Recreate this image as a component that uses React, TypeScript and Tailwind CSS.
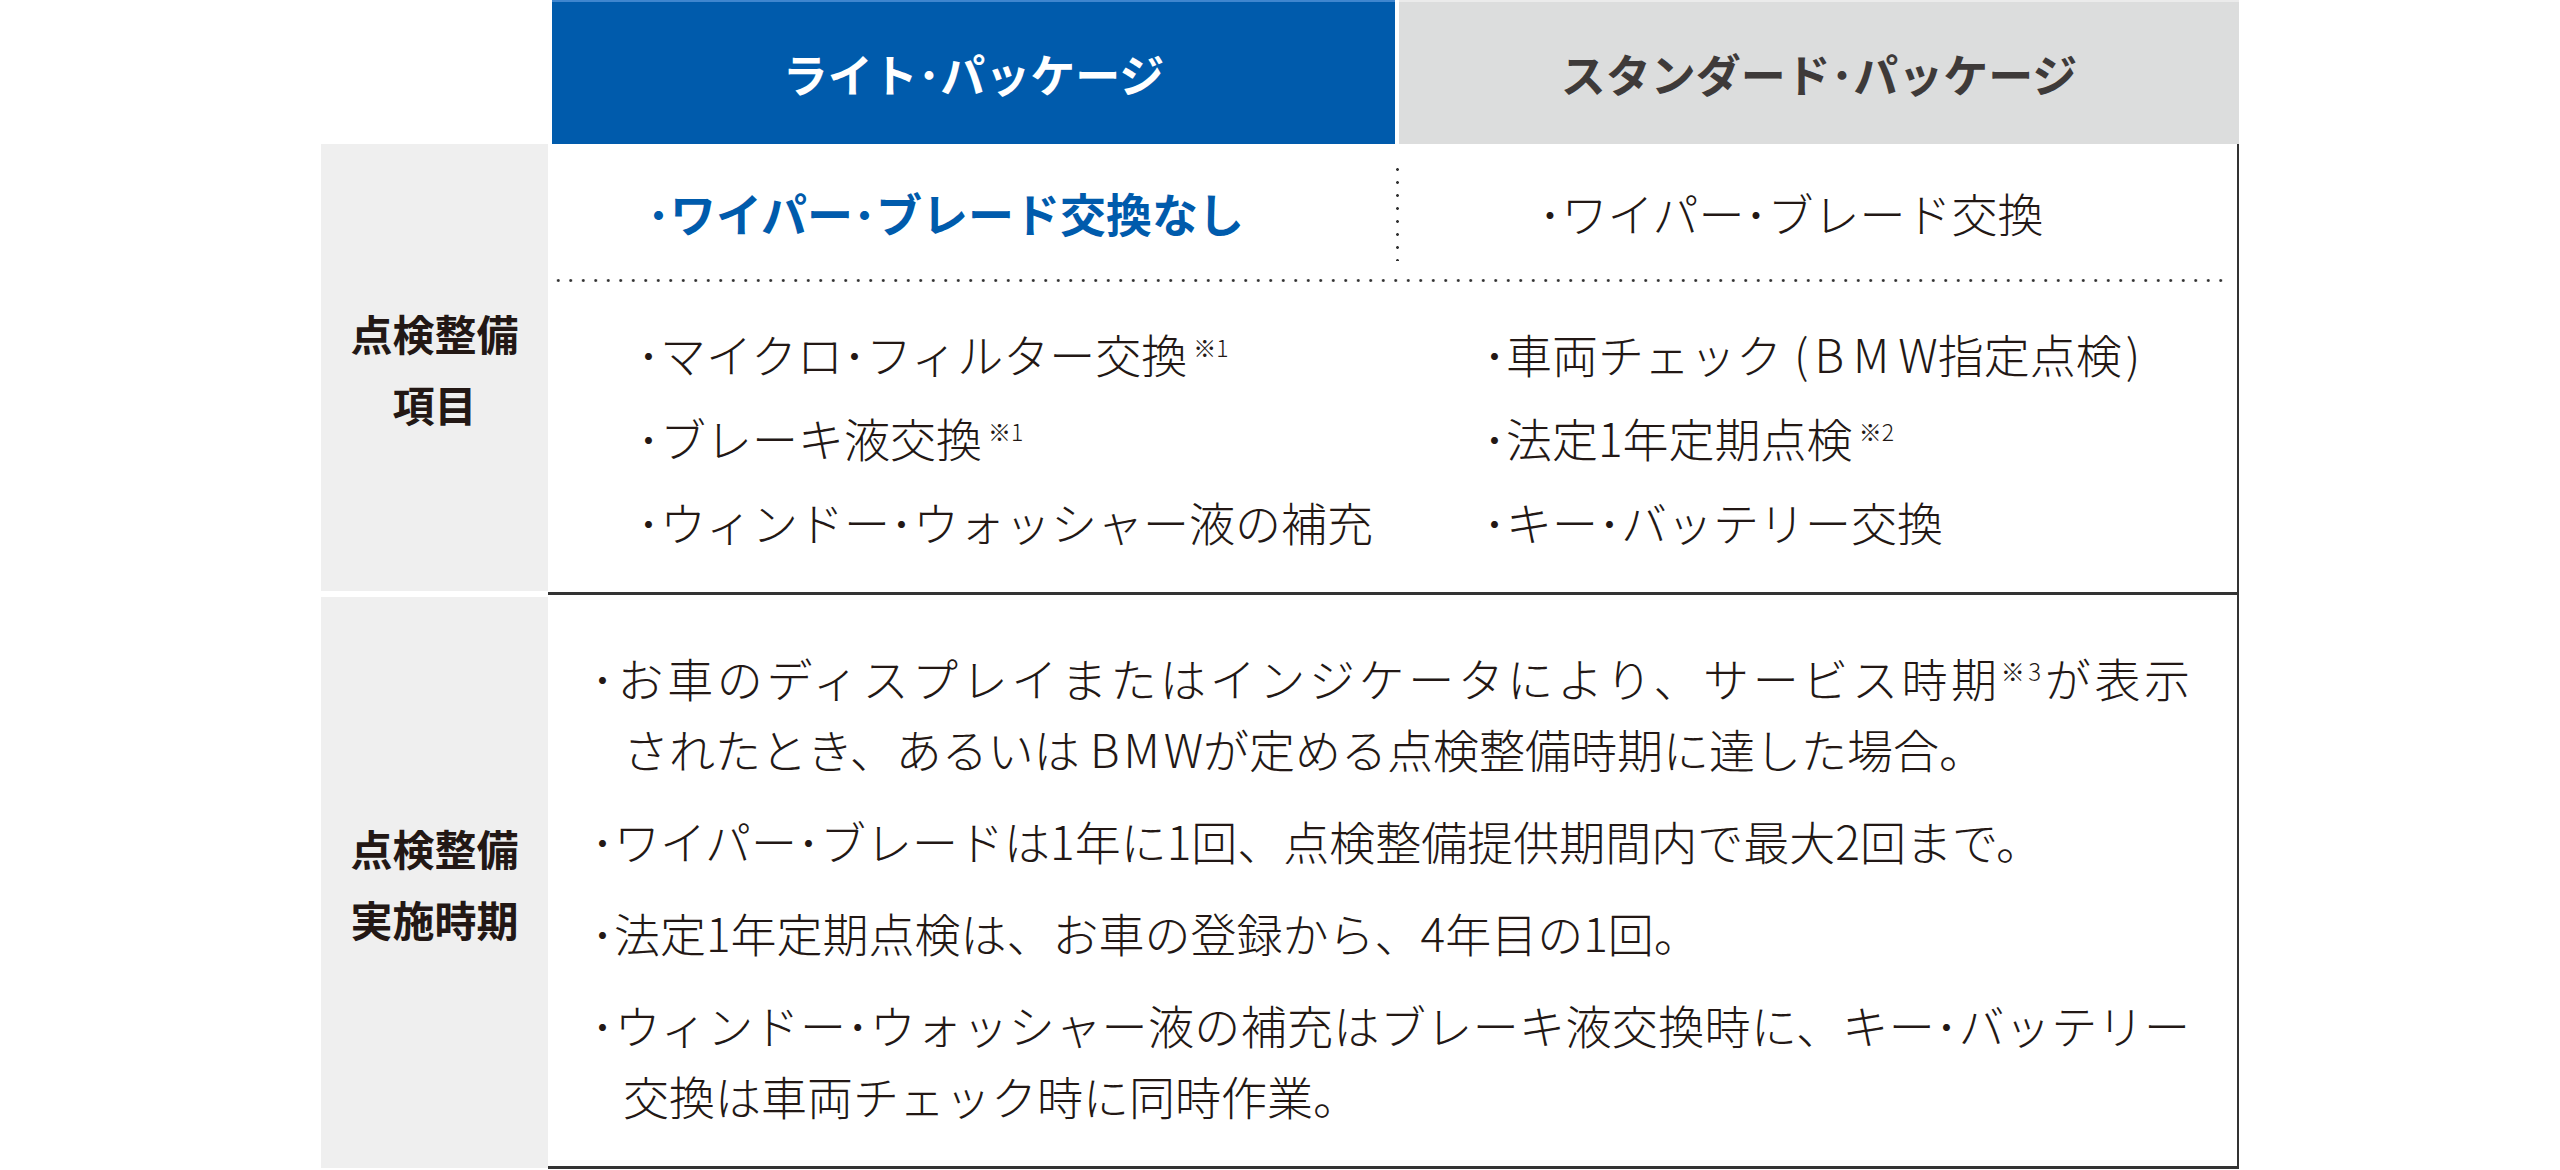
export default function App() {
  return (
    <div className="w-[2560px] h-[1170px] bg-white overflow-hidden font-['Noto_Sans_CJK_JP','Noto_Sans',sans-serif] text-[#231815]">
      <div className="ml-[321px] w-[1918px]">
        {/* header */}
        <div className="flex h-[144px]">
          <div className="w-[231px]" />
          <div className="w-[843px] bg-[#005bac] border-t-2 border-[#3f86cf] flex items-center justify-center">
            <span className="text-white font-bold text-[45px] leading-none">ライト･パッケージ</span>
          </div>
          <div className="w-[4px]" />
          <div className="w-[840px] bg-[#dcdddd] border-t-2 border-[#ebebeb] flex items-center justify-center">
            <span className="text-[#3e3a39] font-bold text-[45px] leading-none">スタンダード･パッケージ</span>
          </div>
        </div>

        {/* row 1 */}
        <div className="flex items-start">
          <div className="w-[227px] h-[447px] bg-[#efefef] flex items-center justify-center">
            <div className="text-center font-bold text-[42px] leading-[71px]">
              <div>点検整備</div>
              <div>項目</div>
            </div>
          </div>
          <div className="w-[1691px] h-[451px] border-r-2 border-b-[3px] border-[#333] flex flex-col">
            <div className="h-[135px] flex pl-[4px]">
              <div className="w-[843px] flex items-center justify-center pr-[56px]">
                <span className="text-[#005bac] font-bold text-[46px] leading-none">･ワイパー･ブレード交換なし</span>
              </div>
              <div className="w-[4px] flex items-center justify-center">
                <div className="w-[3px] h-[98px] bg-[image:radial-gradient(circle,#333_1.2px,transparent_1.6px)] bg-[length:3px_13px] bg-repeat-y" />
              </div>
              <div className="flex-1 flex items-center justify-center pr-[54px]">
                <span className="text-[46px] font-light leading-none">･ワイパー･ブレード交換</span>
              </div>
            </div>
            <div className="ml-[4px] mr-[6px] h-[3px] bg-[image:radial-gradient(circle,#333_1.2px,transparent_1.6px)] bg-[length:12.5px_3px] bg-repeat-x" />
            <div className="flex-1 flex items-center font-light">
              <div className="w-[935px] pl-[89px] text-[46px] leading-[84px]">
                <div>
                  ･マイクロ･フィルター交換<span className="ml-[6px] text-[23px] leading-none align-[16px]">※1</span>
                </div>
                <div>
                  ･ブレーキ液交換<span className="ml-[6px] text-[23px] leading-none align-[16px]">※1</span>
                </div>
                <div>･ウィンドー･ウォッシャー液の補充</div>
              </div>
              <div className="flex-1 text-[46px] leading-[84px]">
                <div>
                  ･車両チェック<span className="ml-[12px] mr-[6px]">(</span>
                  <span className="tracking-[9px]">BM</span>W指定点検<span className="ml-[4px]">)</span>
                </div>
                <div>
                  ･法定1年定期点検<span className="ml-[6px] text-[23px] leading-none align-[16px]">※2</span>
                </div>
                <div>･キー･バッテリー交換</div>
              </div>
            </div>
          </div>
        </div>

        {/* row 2 */}
        <div className="flex items-start">
          <div className="w-[227px] h-[571px] mt-[2px] bg-[#efefef] flex items-center justify-center">
            <div className="text-center font-bold text-[42px] leading-[71px]">
              <div>点検整備</div>
              <div>実施時期</div>
            </div>
          </div>
          <div className="w-[1691px] h-[574px] border-r-2 border-b-[3px] border-[#333] pl-[43px] pt-[47px]">
            <div className="w-[1599px] text-[46px] font-light leading-[71px] flex flex-col gap-[21px]">
              <div>
                <div className="text-justify [text-align-last:justify]">
                  ･お車のディスプレイまたはインジケータにより、サービス時期<span className="text-[24px] leading-none align-[16px]">※3</span>が表示
                </div>
                <div className="pl-[32px]">
                  されたとき、あるいは <span className="tracking-[4px]">BM</span>Wが定める点検整備時期に達した場合。
                </div>
              </div>
              <div>･ワイパー･ブレードは1年に1回、点検整備提供期間内で最大2回まで。</div>
              <div>･法定1年定期点検は、お車の登録から、4年目の1回。</div>
              <div>
                <div className="text-justify [text-align-last:justify]">
                  ･ウィンドー･ウォッシャー液の補充はブレーキ液交換時に、キー･バッテリー
                </div>
                <div className="pl-[32px]">交換は車両チェック時に同時作業。</div>
              </div>
            </div>
          </div>
        </div>
      </div>
    </div>
  );
}
